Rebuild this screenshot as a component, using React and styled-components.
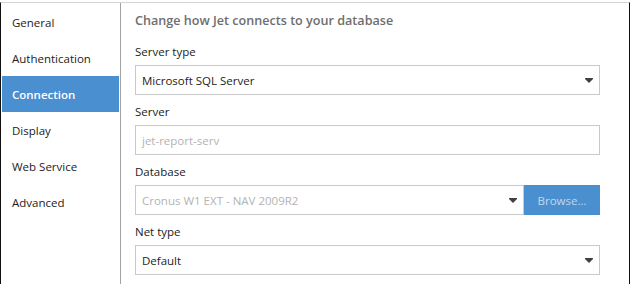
import React from "react";
import styled, { createGlobalStyle } from "styled-components";

const Global = createGlobalStyle`
  html, body {
    margin: 0;
    padding: 0;
    background: #fff;
  }
  body {
    font-family: "Open Sans", "Noto Sans", sans-serif;
    font-size: 11px;
    color: #222;
  }
`;

const Frame = styled.div`
  width: 630px;
  height: 284px;
  box-sizing: border-box;
  padding-top: 2px;
  overflow: hidden;
`;

const Window = styled.div`
  display: flex;
  height: 282px;
  border-top: 1px solid #d4d4d4;
  border-left: 1px solid #111;
  border-right: 1px solid #111;
  box-sizing: border-box;
`;

const Sidebar = styled.nav`
  width: 119px;
  flex: none;
  display: flex;
  flex-direction: column;
  padding-top: 1px;
  border-right: 1px solid #a3a3a3;
`;

const NavItem = styled.div`
  height: 36px;
  margin: 0 1px;
  padding-left: 10px;
  display: flex;
  align-items: center;
  font-size: 11.5px;
  color: ${(p) => (p.$active ? "#fff" : "#222")};
  font-weight: ${(p) => (p.$active ? 600 : 400)};
  background: ${(p) => (p.$active ? "#4a8fcf" : "transparent")};
`;

const Main = styled.main`
  flex: 1;
  padding: 8px 29px 0 14px;
`;

const Heading = styled.h2`
  margin: 0 0 4px;
  font-size: 12.6px;
  line-height: 20px;
  font-weight: 600;
  color: #6e6e6e;
`;

const Field = styled.div`
  padding-top: 8px;
`;

const Label = styled.div`
  line-height: 18px;
  margin-bottom: 4px;
  font-size: 11.5px;
  color: #222;
`;

const Row = styled.div`
  display: flex;
`;

const Box = styled.div`
  flex: 1;
  height: 30px;
  box-sizing: border-box;
  border: 1px solid #c9c9c9;
  display: flex;
  align-items: center;
  padding: 0 6px;
  font-size: 11.5px;
  color: ${(p) => (p.$muted ? "#b3b3b3" : "#222")};
  white-space: nowrap;
`;

const Value = styled.span`
  flex: 1;
`;

const Button = styled.button`
  width: 76px;
  height: 30px;
  border: none;
  background: #4a8fcf;
  color: #c5d6ea;
  font-family: inherit;
  font-size: 11.5px;
  padding: 0;
`;

function Arrow() {
  return (
    <svg width="8" height="5" viewBox="0 0 8 5">
      <path d="M0 0h8v1L4 5 0 1z" fill="#404040" />
    </svg>
  );
}

const navItems = ["General", "Authentication", "Connection", "Display", "Web Service", "Advanced"];

export default function App() {
  return (
    <Frame>
      <Global />
      <Window>
        <Sidebar>
          {navItems.map((n) => (
            <NavItem key={n} $active={n === "Connection"}>
              {n}
            </NavItem>
          ))}
        </Sidebar>
        <Main>
          <Heading>Change how Jet connects to your database</Heading>
          <Field>
            <Label>Server type</Label>
            <Box>
              <Value>Microsoft SQL Server</Value>
              <Arrow />
            </Box>
          </Field>
          <Field>
            <Label>Server</Label>
            <Box $muted>
              <Value>jet-report-serv</Value>
            </Box>
          </Field>
          <Field>
            <Label>Database</Label>
            <Row>
              <Box $muted>
                <Value>Cronus W1 EXT - NAV 2009R2</Value>
                <Arrow />
              </Box>
              <Button>Browse...</Button>
            </Row>
          </Field>
          <Field>
            <Label>Net type</Label>
            <Box>
              <Value>Default</Value>
              <Arrow />
            </Box>
          </Field>
        </Main>
      </Window>
    </Frame>
  );
}
